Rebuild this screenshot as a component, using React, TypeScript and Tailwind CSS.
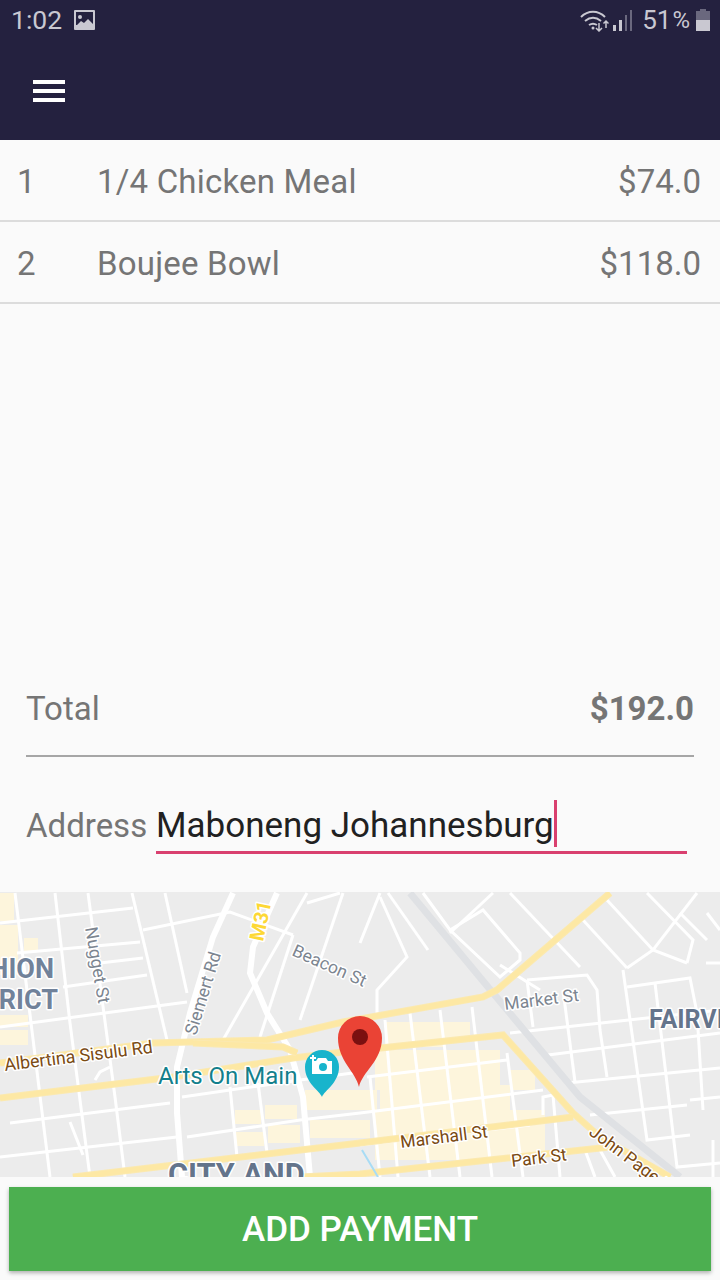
import React from "react";

const white: string[] = [
  "15,893 50,1177", "55,893 70,1023 90,1177", "88,893 115,1097 125,1177", "132,893 167,1040", "165,893 187,993",
  "0,923 133,908", "143,930 230,912 293,935", "17,953 140,942", "63,987 147,975", "100,963 143,958", "0,1027 187,1002",
  "95,1080 100,1072 110,1067",
  "10,1123 170,1103", "182,1097 300,1080 360,1072", "0,1157 177,1137", "187,1137 300,1120 360,1113 543,1090",
  "70,1122 83,1155", "230,1087 237,1157", "258,1083 267,1153",
  "307,893 223,1040", "343,893 300,1020", "293,935 260,1037", "307,903 340,893", "380,893 360,943", "380,897 407,957 377,990 377,1015",
  "388,893 428,950", "423,893 450,930 483,910 520,953 520,960 500,977 450,930", "493,893 450,933", "510,893 580,967", "500,965 540,990",
  "583,920 627,968", "607,900 653,950 687,963", "647,893 693,940 687,963", "697,893 653,950 627,968", "680,913 707,940", "707,913 720,930", "706,963 720,963",
  "527,980 587,975 597,990 600,1030 607,1077", "527,980 533,1027", "563,990 575,1082",
  "623,970 647,1140 690,1135", "627,987 690,978 697,1013 703,1110", "655,983 677,1167 720,1163",
  "510,1033 720,1010", "548,1055 720,1033", "567,1083 720,1068", "590,1115 687,1105", "690,1100 720,1097", "543,1115 543,1097 553,1095 560,1177", "713,1140 713,1177",
  "370,1077 380,1177", "385,1020 398,1177", "410,1013 430,1177", "440,1010 460,1177", "472,1007 492,1177", "507,1053 523,1177", "367,1077 507,1060",
  "360,1145 530,1125", "585,1150 595,1177", "600,1150 615,1177",
];
const thick: string[] = [
  "233,893 213,937 190,1013 177,1067 177,1113 182,1177",
  "277,893 253,947 250,973 267,1013 290,1050 303,1097 310,1177",
];
const yellow: string[] = [
  "0,1063 153,1043 267,1040 343,1022 483,997 497,990 610,893",
  "0,1098 173,1077 293,1058 343,1052 503,1035 573,1113 600,1137 670,1177",
  "73,1177 360,1143 573,1117",
  "300,1177 360,1174 610,1147",
  "193,1043 283,1047 297,1053",
];
const blocks: [number, number, number, number][] = [
  [0, 893, 14, 28], [0, 925, 18, 50], [24, 938, 14, 14], [0, 1015, 28, 12], [0, 1030, 28, 15],
  [305, 1090, 72, 20], [235, 1110, 26, 14], [265, 1105, 32, 14], [236, 1132, 28, 14], [268, 1125, 32, 18],
  [310, 1120, 60, 18], [385, 1022, 60, 25], [445, 1022, 25, 20], [375, 1050, 125, 40], [380, 1085, 130, 30], [375, 1110, 170, 50], [510, 1070, 25, 20],
];

function Map() {
  return (
    <svg viewBox="0 892 720 285" className="block h-[285px] w-[720px] shrink-0" style={{ fontFamily: "Roboto, sans-serif" }}>
      <rect x="0" y="892" width="720" height="285" fill="#ececec" />
      {blocks.map(([x, y, w, h], i) => (
        <rect key={i} x={x} y={y} width={w} height={h} fill="#fdf5dc" />
      ))}
      {white.map((p, i) => (
        <polyline key={i} points={p} fill="none" stroke="#ffffff" strokeWidth="3" />
      ))}
      {thick.map((p, i) => (
        <polyline key={i} points={p} fill="none" stroke="#ffffff" strokeWidth="6" />
      ))}
      <polyline points="410,893 493,993 580,1097 680,1177" fill="none" stroke="#dfe1e4" strokeWidth="7" />
      {yellow.map((p, i) => (
        <g key={i}>
          <polyline points={p} fill="none" stroke="#fbe9b0" strokeWidth="7" />
          <polyline points={p} fill="none" stroke="#fde8a4" strokeWidth="5" />
        </g>
      ))}
      <g paintOrder="stroke" stroke="#ffffff" strokeWidth="3" strokeLinejoin="round">
        <text x="54" y="978" textAnchor="end" fontSize="27" fontWeight="700" fill="#71829a">HION</text>
        <text x="58" y="1009" textAnchor="end" fontSize="27" fontWeight="700" fill="#71829a">TRICT</text>
        <text x="649" y="1028" fontSize="25" fontWeight="700" fill="#64748b">FAIRVI</text>
        <text x="168" y="1185" fontSize="30.700" fontWeight="700" fill="#64748b">CITY AND</text>
        <text x="0" y="0" transform="translate(5,1071) rotate(-7)" fontSize="17.800" fill="#7a4a12">Albertina Sisulu Rd</text>
        <text x="0" y="0" transform="translate(401,1148) rotate(-7)" fontSize="17.500" fill="#7a4a12">Marshall St</text>
        <text x="0" y="0" transform="translate(512,1167) rotate(-7)" fontSize="17.500" fill="#7a4a12">Park St</text>
        <text x="0" y="0" transform="translate(588,1134) rotate(37)" fontSize="17.500" fill="#7a4a12">John Page R</text>
        <text x="0" y="0" transform="translate(505,1010) rotate(-7)" fontSize="17.500" fill="#7c8590">Market St</text>
        <text x="0" y="0" transform="translate(291,955) rotate(24)" fontSize="17.500" fill="#7c8590">Beacon St</text>
        <text x="0" y="0" transform="translate(85,928) rotate(80)" fontSize="17.500" fill="#7c8590">Nugget St</text>
        <text x="0" y="0" transform="translate(196,1036) rotate(-73)" fontSize="17.500" fill="#7c8590">Siemert Rd</text>
        <text x="0" y="0" transform="translate(263,942) rotate(-78)" fontSize="20" fontWeight="700" fill="#fdd835">M31</text>
        <text x="158" y="1084" fontSize="24" fill="#137f8c">Arts On Main</text>
      </g>
      <polyline points="362,1150 378,1177" fill="none" stroke="#a8dcf5" strokeWidth="2" />
      <path d="M322 1097c-2-6-17-14-17-30a17 17 0 0 1 34 0c0 16-15 24-17 30z" fill="#18b4cc" />
      <path d="M312 1061h4l2-3h8l2 3h4v13h-20z" fill="#ffffff" />
      <circle cx="323" cy="1067" r="4" fill="#18b4cc" />
      <path d="M310 1058h6M313 1055v6" stroke="#ffffff" strokeWidth="2" />
      <path d="M359 1087c-3-15-21-26-21-49a22 22 0 0 1 44 0c0 23-20 34-23 49z" fill="#ea4335" />
      <circle cx="360" cy="1037" r="8" fill="#7b1010" />
    </svg>
  );
}

export default function App() {
  return (
    <div className="flex h-[1280px] w-[720px] flex-col overflow-hidden bg-[#fafafa] font-['Roboto',sans-serif]">
      <header className="h-[140px] shrink-0 bg-[#24213f]">
        <div className="flex h-[40px] items-center justify-between pl-[11px] pr-[10px] text-[26.500px] text-[#c9c8d1]">
          <div className="flex items-center gap-[12px]">
            <span>1:02</span>
            <svg width="21" height="20" viewBox="0 0 21 20">
              <rect width="21" height="20" rx="1" fill="#c9c8d1" />
              <rect x="2" y="2" width="17" height="13" fill="#24213f" />
              <circle cx="6" cy="7" r="2" fill="#c9c8d1" />
              <path d="M2 16l5-5 3 2 4-4 5 5v2H2z" fill="#c9c8d1" />
            </svg>
          </div>
          <div className="flex items-center">
            <svg width="30" height="24" viewBox="0 0 30 24" fill="none" stroke="#c9c8d1" strokeWidth="2">
              <path d="M2 9c7-7 17-7 24 0M6 13c5-4 11-4 16 0M10 17c3-2 5-2 8 0" />
              <circle cx="14" cy="20" r="1.500" fill="#c9c8d1" stroke="none" />
              <path d="M20 15v8M17 20l3 3 3-3M27 13v7M24.500 15.500l2.500-2.500 2.500 2.500" strokeWidth="1.500" />
            </svg>
            <svg width="20" height="24" viewBox="0 0 20 24" className="ml-[4px]">
              <rect x="0" y="17" width="3" height="6" fill="#c9c8d1" />
              <rect x="6" y="12" width="3" height="11" fill="#c9c8d1" />
              <rect x="12" y="7" width="2" height="16" fill="#6a687e" />
              <rect x="17" y="2" width="2" height="21" fill="#6a687e" />
            </svg>
            <span className="ml-[9px] text-[26px]">51</span>
            <span className="ml-[1px] text-[24px]">%</span>
            <svg width="14" height="22" viewBox="0 0 14 22" className="ml-[6px]">
              <path d="M4 0h6v2h4v20H0V2h4z" fill="#6a687e" />
              <rect y="11" width="14" height="11" fill="#c9c8d1" />
            </svg>
          </div>
        </div>
        <div className="pl-[33px] pt-[40px]">
          <div className="flex w-[32px] flex-col gap-[5px]">
            <div className="h-[4px] bg-white" />
            <div className="h-[4px] bg-white" />
            <div className="h-[4px] bg-white" />
          </div>
        </div>
      </header>

      {[
        ["1", "1/4 Chicken Meal", "$74.0"],
        ["2", "Boujee Bowl", "$118.0"],
      ].map(([n, name, price]) => (
        <div key={n} className="flex h-[82px] shrink-0 items-center border-b-2 border-[#dcdcdc] pl-[17px] pr-[19px] pt-[4px] text-[33px] text-[#757575]">
          <span className="w-[80px]">{n}</span>
          <span className="flex-1 tracking-[0.2px]">{name}</span>
          <span>{price}</span>
        </div>
      ))}

      <div className="flex-1" />

      <div className="mx-[26px] flex h-[81px] shrink-0 items-start justify-between border-b-2 border-[#a6a6a6] pt-[11px] text-[33px] leading-[44px] text-[#757575]">
        <span>Total</span>
        <span className="font-bold">$192.0</span>
      </div>

      <div className="flex h-[135px] shrink-0 pl-[26px] pr-[33px] pt-[40px]">
        <span className="w-[130px] shrink-0 text-[33px] leading-[58px] text-[#757575]">Address</span>
        <div className="h-[57px] flex-1 border-b-[3px] border-[#d9406f]">
          <span className="mt-[3px] inline-block border-r-[3px] border-[#d9406f] pt-[4px] text-[35px] leading-[43px] text-[#212121]">Maboneng Johannesburg</span>
        </div>
      </div>

      <Map />

      <div className="flex h-[103px] shrink-0 items-start px-[9px] pt-[10px]">
        <button className="flex h-[84px] w-full items-center justify-center bg-[#4caf50] pt-[3px] text-[35px] font-medium text-white shadow-[0_2px_4px_rgba(0,0,0,0.3)]">
          ADD PAYMENT
        </button>
      </div>
    </div>
  );
}
